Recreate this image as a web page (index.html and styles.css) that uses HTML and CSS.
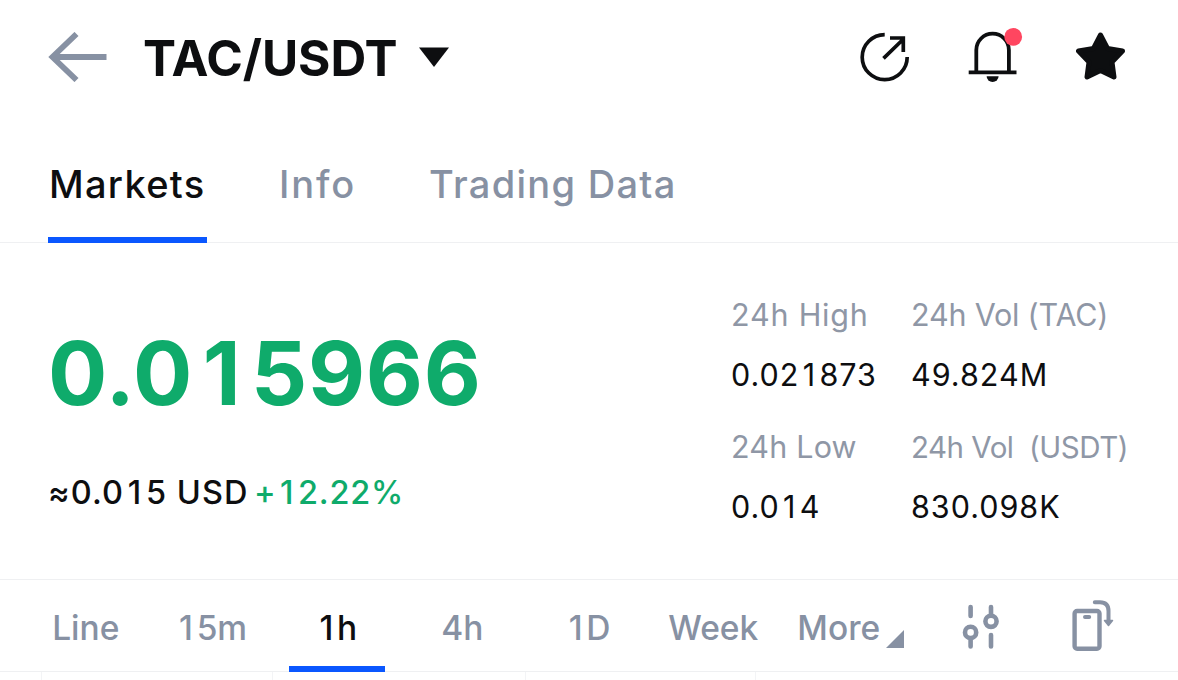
FILE: index.html
```html
<!DOCTYPE html>
<html lang="en">
<head>
  <meta charset="UTF-8">
  <meta name="viewport" content="width=device-width, initial-scale=1.0">
  <title>TAC/USDT</title>
  <link rel="stylesheet" href="styles.css">
</head>
<body>
  <header class="header">
    <svg class="back" width="60" height="50" viewBox="0 0 60 50">
      <path d="M28.5 2 L4.5 25 L28.5 48 M4 25 H58.5" fill="none" stroke="#8791a3" stroke-width="5.8"/>
    </svg>
    <h1 class="pair">TAC/USDT</h1>
    <svg class="caret" width="30" height="20" viewBox="0 0 30 20">
      <path d="M0 0.5 H30 L15 20 Z" fill="#0d0e10"/>
    </svg>
    <div class="actions">
      <svg class="share" width="50" height="50" viewBox="0 0 50 50">
        <g fill="none" stroke="#0d0e10" stroke-width="3.7">
          <path d="M24.7 2.6 A22.5 22.5 0 1 0 47.2 25"/>
          <path d="M23.5 26.3 L44 6.5 M30 6 H43.3 V20"/>
        </g>
      </svg>
      <svg width="56" height="58" viewBox="0 0 56 58">
        <path d="M8.3 44 V22 A16.3 16.3 0 0 1 40.9 22 V44 M0.7 44.3 H48.5" fill="none" stroke="#0d0e10" stroke-width="3.8"/>
        <path d="M18.6 48.3 H30.6 A6 5.6 0 0 1 18.6 48.3 Z" fill="#0d0e10"/>
        <circle cx="45.2" cy="8.9" r="8.9" fill="#ff4660"/>
      </svg>
      <svg class="star" width="50" height="50" viewBox="0 0 50 50">
        <path d="M24.5 3 L31.5 16.5 L46.5 19 L36 30 L38 45 L24.5 38.5 L11 45 L13 30 L2.5 19 L17.5 16.5 Z" fill="#0d0e10" stroke="#0d0e10" stroke-width="5" stroke-linejoin="round"/>
      </svg>
    </div>
  </header>

  <nav class="tabs">
    <a class="tab active">Markets</a>
    <a class="tab info">Info</a>
    <a class="tab trading">Trading Data</a>
  </nav>

  <section class="ticker">
    <div class="price-box">
      <div class="price">0.0<span class="one">1</span>5966</div>
      <div class="sub"><span class="usd">≈0.0<span class="one">1</span>5 USD</span><span class="change">+<span class="one">1</span>2.22%</span></div>
    </div>
    <div class="stats">
      <div class="label high">24h High</div>
      <div class="label vol">24h Vol (TAC)</div>
      <div class="value">0.02<span class="one">1</span>873</div>
      <div class="value">49.824M</div>
      <div class="label low">24h Low</div>
      <div class="label vol-usdt">24h Vol&nbsp; (USDT)</div>
      <div class="value">0.0<span class="one">1</span>4</div>
      <div class="value">830.098K</div>
    </div>
  </section>

  <nav class="periods">
    <a class="period">Line</a>
    <a class="period"><span class="one">1</span>5m</a>
    <a class="period active"><span class="one">1</span>h</a>
    <a class="period">4h</a>
    <a class="period"><span class="one">1</span>D</a>
    <a class="period">Week</a>
    <a class="period more">More
      <svg class="corner" width="18" height="18" viewBox="0 0 18 18">
        <path d="M18 0 V18 H0 Z" fill="#8791a3"/>
      </svg>
    </a>
    <svg class="sliders" width="38" height="50" viewBox="0 0 38 50">
      <g fill="none" stroke="#8791a3" stroke-width="4.6" stroke-linecap="round">
        <path d="M8.6 5 V14 M8.6 38 V44.5 M29 5 V12 M29 33 V44.5"/>
        <circle cx="8.6" cy="30.4" r="5.6"/>
        <circle cx="29" cy="19.3" r="5.6"/>
      </g>
    </svg>
    <svg class="rotate" width="44" height="54" viewBox="0 0 44 54">
      <g fill="none" stroke="#8791a3" stroke-width="4.4" stroke-linecap="round">
        <rect x="3.6" y="12" width="24.9" height="37.8" rx="2.5"/>
        <path d="M14 18 H18.2 M23.8 3.2 H29 Q37.5 3.2 37.5 12 V21" stroke-width="4"/>
      </g>
      <path d="M33.5 21.5 H41.5 L37.5 26.5 Z" fill="#8791a3" stroke="#8791a3" stroke-width="1.5" stroke-linejoin="round"/>
    </svg>
  </nav>

  <div class="chart">
    <i></i><i></i><i></i><i></i>
  </div>
</body>
</html>
```

FILE: styles.css
```css
* {
  box-sizing: border-box;
}
body {
  margin: 0;
  height: 680px;
  overflow: hidden;
  font-family: Inter, "Liberation Sans", sans-serif;
  background-color: #fff;
  color: #0d0e10;
  white-space: nowrap;
}
svg {
  display: block;
  flex: none;
}
/* the narrow 1 gets the same room as the other digits */
.one {
  margin: 0 0.11em;
}
.header {
  display: flex;
  align-items: center;
  height: 114px;
  padding: 0 52px 0 48px;
}
.pair {
  margin: 0 0 0 35px;
  width: 276px;
  font-size: 49.5px;
  font-weight: 700;
  line-height: 60px;
  letter-spacing: -0.1px;
  padding-top: 2px;
}
.actions {
  display: flex;
  align-items: center;
  margin-left: auto;
}
.share {
  margin-right: 58px;
}
.star {
  margin-left: 52px;
}
.tabs {
  display: flex;
  height: 129px;
  padding-left: 48px;
  border-bottom: 1px solid #eff0f2;
}
.tab {
  height: 129px;
  padding: 46px 0 0 1px;
  font-size: 38px;
  font-weight: 500;
  line-height: 48px;
  letter-spacing: 1.3px;
  color: #8791a3;
}
.tab.active {
  width: 159px;
  color: #0d0e10;
  border-bottom: 6px solid #0a57ff;
}
.tab.info {
  width: 150px;
  margin-left: 71px;
  letter-spacing: 1.9px;
}
.ticker {
  display: flex;
  height: 337px;
  padding-left: 48px;
  border-bottom: 1px solid #eff0f2;
}
.price-box {
  width: 683px;
}
.price {
  margin-top: 75px;
  font-size: 88px;
  font-weight: 700;
  line-height: 110px;
  letter-spacing: 0.7px;
  color: #0fab6b;
}
.sub {
  display: flex;
  margin-top: 45px;
  font-size: 32.5px;
  font-weight: 500;
  line-height: 40px;
}
.usd {
  width: 206px;
  letter-spacing: 1.1px;
}
.change {
  letter-spacing: 0.8px;
  color: #0fab6b;
}
.stats {
  display: grid;
  grid-template-columns: 180px auto;
  grid-auto-rows: 60px 72px;
  padding-top: 52px;
  font-size: 30.5px;
  line-height: 40px;
}
.label {
  color: #8f97a6;
}
.value {
  letter-spacing: 1px;
}
.high {
  letter-spacing: 0.8px;
}
.low {
  letter-spacing: 0.2px;
}
.vol {
  letter-spacing: -0.2px;
}
.vol-usdt {
  font-size: 29.5px;
  letter-spacing: -0.5px;
}
.periods {
  display: flex;
  height: 92px;
  padding-left: 23px;
  border-bottom: 1px solid #eff0f2;
}
.period {
  position: relative;
  display: flex;
  justify-content: center;
  width: 125.5px;
  height: 92px;
  padding-top: 28px;
  font-size: 33.5px;
  font-weight: 500;
  line-height: 40px;
  color: #8791a3;
}
.period.active {
  width: 96px;
  margin: 0 15px 0 14.5px;
  color: #0d0e10;
  border-bottom: 6px solid #0a57ff;
}
.corner {
  position: absolute;
  right: -2px;
  top: 50px;
}
.sliders {
  margin: 22px 0 0 60px;
}
.rotate {
  margin: 19px 0 0 71px;
}
.chart {
  display: grid;
  grid-template-columns: 231px 253px 230px 1px;
  height: 8px;
  padding-left: 41px;
}
.chart i {
  border-left: 1px solid #f3f4f6;
}
```
